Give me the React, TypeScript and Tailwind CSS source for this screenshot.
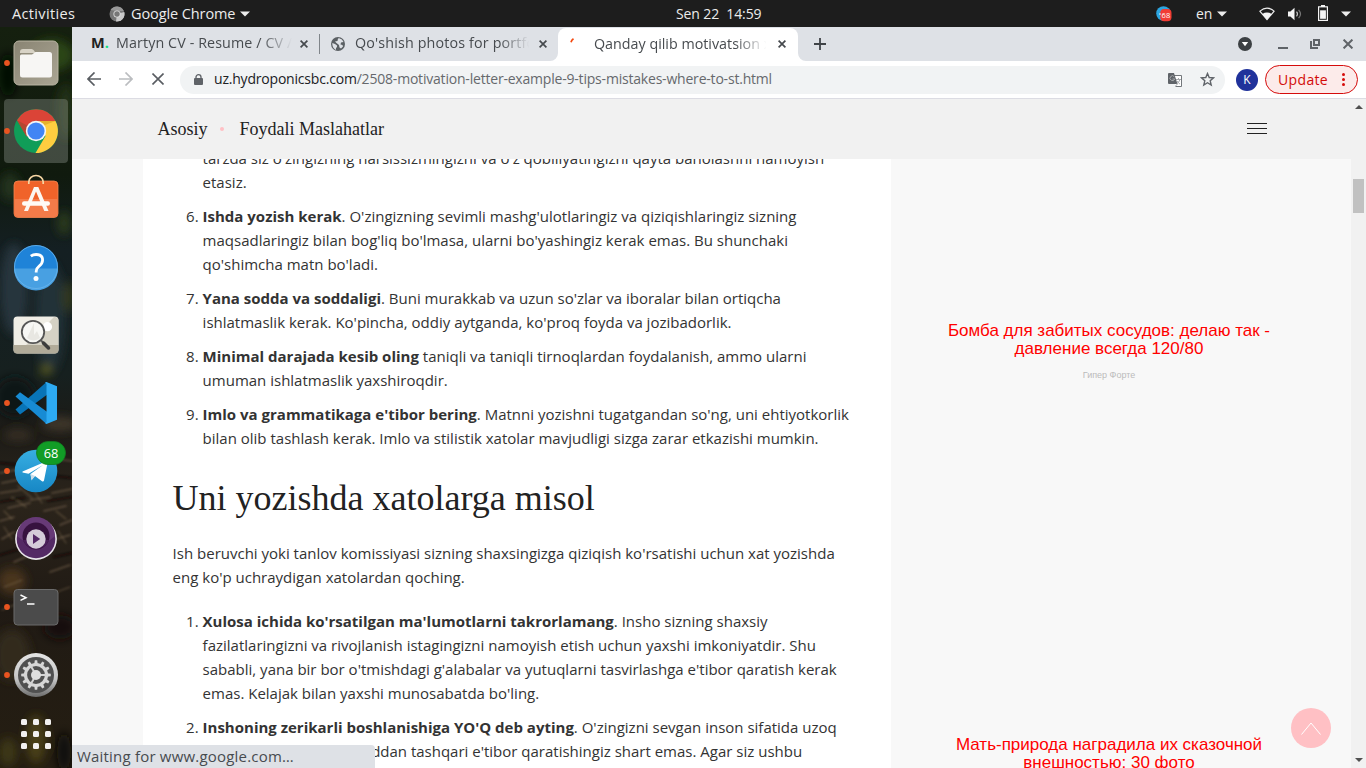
import type { ReactNode } from "react";

function TopBar() {
  return (
    <header className="flex h-[27px] shrink-0 items-center bg-[#1d1d1d] font-['Open_Sans','Noto_Sans',sans-serif] text-[14px] leading-[27px] whitespace-nowrap text-[#ececec]">
      <span className="ml-3 w-[97px] text-[14.5px] tracking-[0.35px]">Activities</span>
      <svg className="size-4" viewBox="0 0 16 16">
        <circle cx="8" cy="8" r="7.5" fill="#777" />
        <path d="M8 8 15.3 6A7.5 7.5 0 0 1 7 15.4Z" fill="#c9c9c9" />
        <path d="M1.5 4A7.5 7.5 0 0 1 14.8 5H8Z" fill="#999" />
        <circle cx="8" cy="8" r="3.6" fill="#ddd" />
        <circle cx="8" cy="8" r="2.7" fill="#777" />
      </svg>
      <span className="ml-1.5 w-[105px] text-[14.5px] tracking-[-0.1px]">Google Chrome</span>
      <svg className="ml-1 h-[6px] w-[10px]" viewBox="0 0 10 6"><path d="M0 .5h10L5 5.5Z" fill="#ececec" /></svg>
      <span className="ml-[426px] w-[87px] tracking-[-0.1px]">Sen 22&nbsp; 14:59</span>
      <svg className="ml-[393px] size-[16px]" viewBox="0 0 16 16">
        <circle cx="7.5" cy="7.5" r="7.3" fill="#2ca5e0" />
        <rect x="4.2" y="3" width="11.3" height="12.3" rx="4" fill="#f23c34" />
        <circle cx="4" cy="8" r=".8" fill="#fff" />
        <text x="9.9" y="12" textAnchor="middle" fontSize="7.5" fill="#fff" fontFamily="Open Sans, sans-serif">68</text>
      </svg>
      <span className="ml-[24px] w-[17px]">en</span>
      <svg className="ml-1 h-[6px] w-[10px]" viewBox="0 0 10 6"><path d="M0 .5h10L5 5.5Z" fill="#ececec" /></svg>
      <svg className="ml-[32px] h-[14px] w-[16px]" viewBox="0 0 16 14">
        <path d="M.9 4.2Q8 -1.9 15.1 4.2L8 12.6Z" fill="none" stroke="#ececec" strokeWidth="1.1" />
        <path d="M3.3 6.9Q8 4 12.7 6.9L8 12.7Z" fill="#f4f4f4" />
      </svg>
      <svg className="ml-[12px] h-[14px] w-[16px]" viewBox="0 0 16 14">
        <path d="M1 4.5h2.4L7.5.7v12.6L3.4 9.5H1Z" fill="#f4f4f4" />
        <path d="M9.5 4.7q2 2.3 0 4.6" fill="none" stroke="#c0c0c0" strokeWidth="1.2" />
        <path d="M11.6 2.8q3.8 4.2 0 8.4" fill="none" stroke="#777" strokeWidth="1.2" />
      </svg>
      <svg className="mb-[2px] ml-[15px] h-[16px] w-[10px]" viewBox="0 0 10 16">
        <path d="M3 0h4v1.2h3V16H0V1.2h3Z" fill="#f4f4f4" />
        <path d="M1.2 2.4h7.6v12.4H1.2Z" fill="#1d1d1d" />
        <path d="M2.1 5.3h5.8v8.5H2.1Z" fill="#f4f4f4" />
      </svg>
      <svg className="ml-[13px] h-[6px] w-[10px]" viewBox="0 0 10 6"><path d="M0 .5h10L5 5.5Z" fill="#ececec" /></svg>
    </header>
  );
}

function DockItem({ running = false, children }: { running?: boolean; children: ReactNode }) {
  return (
    <svg className="relative block h-[68px] w-[72px] shrink-0" viewBox="0 0 72 68">
      {children}
      {running && <circle cx="7" cy="34" r="2.9" fill="#e95420" />}
    </svg>
  );
}

function Wallpaper() {
  return (
    <svg className="absolute inset-0 size-full" viewBox="0 0 72 741" preserveAspectRatio="none">
      <defs>
        <linearGradient id="wall" x1="0" y1="0" x2="0" y2="1">
          <stop offset="0" stopColor="#15200f" /><stop offset=".2" stopColor="#101a0e" />
          <stop offset=".3" stopColor="#141f22" /><stop offset=".47" stopColor="#16201f" />
          <stop offset=".54" stopColor="#1c1b17" /><stop offset=".64" stopColor="#2b241b" />
          <stop offset=".78" stopColor="#201a14" /><stop offset="1" stopColor="#251e12" />
        </linearGradient>
        <filter id="haze" x="-50%" y="-20%" width="200%" height="140%"><feGaussianBlur stdDeviation="5" /></filter>
        <filter id="soft" x="-20%" y="-20%" width="140%" height="140%"><feGaussianBlur stdDeviation="1" /></filter>
      </defs>
      <rect width="72" height="741" fill="url(#wall)" />
      <g filter="url(#haze)">
        <ellipse cx="52" cy="28" rx="22" ry="16" fill="#2b4514" />
        <ellipse cx="8" cy="48" rx="9" ry="22" fill="#060b06" />
        <ellipse cx="66" cy="85" rx="9" ry="28" fill="#223315" />
        <ellipse cx="10" cy="160" rx="10" ry="14" fill="#20321a" />
        <ellipse cx="64" cy="196" rx="7" ry="12" fill="#2c3b1b" />
        <ellipse cx="14" cy="262" rx="14" ry="46" fill="#26343c" />
        <ellipse cx="50" cy="290" rx="15" ry="55" fill="#223038" />
        <ellipse cx="68" cy="270" rx="6" ry="16" fill="#30381b" />
        <ellipse cx="46" cy="343" rx="6" ry="5" fill="#5c5d1b" />
        <ellipse cx="15" cy="370" rx="20" ry="20" fill="#0e1213" />
        <ellipse cx="60" cy="397" rx="18" ry="7" fill="#40372c" />
        <ellipse cx="18" cy="408" rx="14" ry="5" fill="#3a3228" />
        <ellipse cx="12" cy="554" rx="14" ry="13" fill="#49341b" />
        <ellipse cx="60" cy="600" rx="16" ry="12" fill="#121009" />
        <ellipse cx="12" cy="628" rx="18" ry="26" fill="#33291a" />
        <ellipse cx="36" cy="712" rx="10" ry="24" fill="#494018" />
        <ellipse cx="8" cy="725" rx="9" ry="14" fill="#3e3716" />
        <ellipse cx="64" cy="725" rx="7" ry="20" fill="#0c0b07" />
      </g>
      <g filter="url(#soft)" fill="none" strokeLinecap="round">
        <path d="M0 446 20 442M40 430 72 434M2 456 32 450M0 466 20 463M30 473 50 470M52 466 72 462M8 481 30 476M0 494 14 490M44 484 66 479M60 498 72 493M2 512 14 505M50 514 70 508M14 535 30 528M50 545 70 538" stroke="#6b5a45" strokeWidth="1.6" opacity=".75" />
        <path d="M18 459 32 471M34 464 42 476M12 470 26 480M4 484 12 492M56 484 66 492M4 500 12 512M58 504 66 516M4 560 22 553M54 566 70 560M2 583 14 578" stroke="#8c7557" strokeWidth="1.2" opacity=".5" />
        <path d="M0 436 40 440M36 447 72 451M0 475 24 471M48 474 72 470M0 528 20 522M54 530 72 526" stroke="#0c0b0a" strokeWidth="3" opacity=".55" />
      </g>
    </svg>
  );
}

function Dock() {
  const teeth = Array.from({ length: 12 }, (_, i) => i * 30);
  return (
    <aside className="relative flex w-[72px] shrink-0 flex-col overflow-hidden bg-[#171a12] pt-[2px]">
      <Wallpaper />
      <DockItem running>
        <defs><linearGradient id="files" x1="0" y1="0" x2="1" y2="1"><stop stopColor="#898473" /><stop offset="1" stopColor="#aaa593" /></linearGradient></defs>
        <rect x="14" y="12" width="44" height="44" rx="5" fill="url(#files)" stroke="#b9b4a2" strokeWidth="1" />
        <path d="M20 23q0-3 3-3h8.500q1.500 0 2.500 1.500l1.500 2.500H20Z" fill="#d8d3c6" />
        <path d="M20 27q0-1.500 1.500-1.500h10.500l3.500-2.500h14q2.500 0 2.500 2.500V46q0 2.500-2.500 2.500h-27Q20 48.500 20 46Z" fill="#f7f6f4" />
      </DockItem>
      <DockItem running>
        <rect x="4" y="2" width="64" height="64" rx="4" fill="#a9afa8" fillOpacity=".32" />
        <circle cx="36" cy="34" r="22" fill="#109d58" />
        <path d="M36 24H55.500A22 22 0 0 1 35.500 56L45.500 39Z" fill="#ffcd40" />
        <path d="M36 34 26.500 39.500 17 23.200A22 22 0 0 1 55.500 24H36Z" fill="#db4437" />
        <path d="M17 23.200 26.500 39.500 28 29Z" fill="#8f4a2c" opacity=".5" />
        <path d="M36 24h19.500L45 28Z" fill="#c99016" opacity=".45" />
        <circle cx="36" cy="34" r="10.200" fill="#f3f5f7" /><circle cx="36" cy="34" r="8.600" fill="#4285f4" />
      </DockItem>
      <DockItem>
        <rect x="14" y="16" width="44" height="36.500" rx="4" fill="#f0632a" stroke="#f58652" strokeWidth=".8" />
        <path d="M14.500 34h43v14q0 4-4 4h-35q-4 0-4-4Z" fill="#f47b49" />
        <path d="M28.800 19v-2a7.200 6.500 0 0 1 14.400 0v2" fill="none" stroke="#f6d6a4" strokeWidth="1.700" />
        <path d="M34 22h4.300l10.200 24h-4.200L36 26.500 28 46h-4Z" fill="#fbf7f2" />
        <rect x="22" y="36.300" width="28" height="4.400" rx="2.200" fill="#fffaf5" />
      </DockItem>
      <DockItem>
        <circle cx="36" cy="34" r="22" fill="#1f83d8" />
        <path d="M14 35.500h44A22 22 0 0 1 14 35.500Z" fill="#48a0e2" />
        <circle cx="36" cy="34" r="21.500" fill="none" stroke="#6bb5ec" strokeWidth=".8" />
        <path d="M30.800 23.200q2.300-1.700 5.300-1.700 6.500 0 6.500 5.600 0 3.500-3.700 6.300-2.700 2.100-2.700 4.900v1.200" fill="none" stroke="#fff" strokeWidth="2.800" />
        <circle cx="36" cy="45.500" r="2.500" fill="#fff" />
      </DockItem>
      <DockItem>
        <rect x="13.500" y="15.500" width="45" height="37" rx="4" fill="#f0eee6" />
        <path d="M54 16h0.500q4 0 4 4v24H26Z" fill="#d5d2c5" />
        <path d="M13.500 44h45v4.500q0 4-4 4h-37q-4 0-4-4Z" fill="#b1ab99" />
        <circle cx="47.500" cy="25.700" r="4.600" fill="#fff" />
        <path d="m40.500 39 3 3" stroke="#5d5d5d" strokeWidth="2" />
        <path d="m43.500 42 5 5" stroke="#3c3c3c" strokeWidth="3.500" strokeLinecap="round" />
        <circle cx="33" cy="31" r="11.200" fill="#f7f7f4" stroke="#555" strokeWidth="1.800" />
        <path d="m27 37 7-15v12l3-4 3 7a10 10 0 0 1-13 0Z" fill="#dddcd5" opacity=".6" />
      </DockItem>
      <DockItem running>
        <path d="M15.500 40.500 46.500 13 48 25 20 45.500Z" fill="#0874b7" />
        <path d="M15.500 27.500 20 23.200 48 43.500 46.500 55 15.500 27.500Z" fill="#178bd4" />
        <path d="M46.500 13 57 17.300V50.700L46.500 55 45 54Q46.500 54 46.500 52V16Q46.500 14 45 13.500Z" fill="#2daaf2" />
      </DockItem>
      <DockItem running>
        <defs><linearGradient id="telegram" x1="0" y1="0" x2="0" y2="1"><stop stopColor="#37aee2" /><stop offset="1" stopColor="#1787c5" /></linearGradient></defs>
        <circle cx="36" cy="34" r="21.300" fill="url(#telegram)" />
        <path d="M22.500 34.500 47 24q1-.2.700 1.200L44 43.500q-.5 1.500-2 .7L35 39 31.500 42.500l-1-5.500L43 28 28.500 36.800l-6-1.300Z" fill="#fff" />
        <path d="m30.500 37 1 6.500L35 39Z" fill="#c9dce8" />
        <rect x="36.500" y="4.500" width="29" height="23" rx="11.500" fill="#119c26" stroke="#107d1f" strokeWidth=".8" />
        <text x="51" y="21" textAnchor="middle" fill="#fff" fontSize="12.800" fontFamily="Open Sans, sans-serif">68</text>
      </DockItem>
      <DockItem>
        <circle cx="36" cy="34" r="20.900" fill="#e9e5eb" /><circle cx="36" cy="34" r="19.300" fill="#542a65" />
        <path d="M17 31a19 19 0 0 1 38 0q-18 17-38 0Z" fill="#673a77" />
        <circle cx="36" cy="31" r="13.500" fill="#37123f" /><path d="M23 35a14 14 0 0 0 26 0Z" fill="#4b205b" />
        <circle cx="36" cy="34" r="9.700" fill="#d5ccd9" />
        <path d="m33 29 7.200 5-7.200 5Z" fill="#532865" />
      </DockItem>
      <DockItem running>
        <rect x="14" y="16.500" width="44" height="35.500" rx="3.500" fill="#4b4b4b" stroke="#6b6b6b" />
        <path d="m20.500 22 5.500 2.700-5.500 2.700" fill="none" stroke="#fff" strokeWidth="1.500" />
        <path d="M27 31h7.500" stroke="#fff" strokeWidth="1.500" />
      </DockItem>
      <DockItem running>
        <defs><linearGradient id="gear" x1="0" y1="0" x2="0" y2="1"><stop stopColor="#e5e5e5" /><stop offset=".6" stopColor="#c4c4c4" /><stop offset="1" stopColor="#6c6c6c" /></linearGradient></defs>
        <circle cx="36" cy="34" r="22" fill="url(#gear)" /><circle cx="36" cy="34" r="18" fill="#505050" />
        {teeth.map((a) => <path key={a} d="m34.300 23 .5-3.800h2.400l.5 3.800Z" fill="#d7d7d7" transform={`rotate(${a} 36 34)`} />)}
        <circle cx="36" cy="34" r="10.500" fill="none" stroke="#d6d6d6" strokeWidth="3.200" />
        <path d="M36 34h10M36 34l-5-8.700M36 34l-5 8.700" stroke="#d3d3d3" strokeWidth="2" /><circle cx="36" cy="34" r="5" fill="#dedede" />
      </DockItem>
      <div className="relative mt-[10px] ml-[21px] grid w-[30px] grid-cols-3 gap-[6px]">
        {teeth.slice(0, 9).map((n) => <i key={n} className="size-[6px] rounded-[1.5px] bg-[#f2f1ef]" />)}
      </div>
    </aside>
  );
}

function Close({ className = "" }: { className?: string }) {
  return <svg className={`size-[8px] shrink-0 ${className}`} viewBox="0 0 8 8"><path d="m.6.6 6.800 6.800M7.400.600.600 7.400" stroke="#45494d" strokeWidth="1.700" /></svg>;
}

function TabStrip() {
  return (
    <div className="flex h-[34px] shrink-0 items-center bg-[#dee1e6] font-['Open_Sans','Noto_Sans',sans-serif] text-[14.3px] whitespace-nowrap text-[#474b4f]">
      <div className="flex h-full w-[247px] items-center">
        <b className="mb-[2px] ml-[19px] w-[25px] text-[14.5px] font-bold text-[#222]">M<span className="text-[#12e080]">.</span></b>
        <span className="mb-[2px] w-[176px] overflow-hidden tracking-[0.1px] [mask-image:linear-gradient(to_right,black_82%,transparent)]">Martyn CV - Resume / CV /</span>
        <Close className="ml-[8px]" />
      </div>
      <i className="h-5 w-px bg-[#80858a]" />
      <div className="flex h-full w-[238px] items-center">
        <svg className="ml-[11px] size-[14px]" viewBox="0 0 14 14"><circle cx="7" cy="7" r="7" fill="#5b6064" /><path d="M1.300 6 4 7l2 1.500v1.500l-1 1v2Q1 11 1.300 6ZM7 1.500l1.200-.2Q11.500 2 12.500 5L10 5.500 9.500 7.500l2 .5.5 1.500-2 2-1.500-1L8 8 5.500 6 4 4.500 6.500 4Z" fill="#dee1e6" /></svg>
        <span className="mb-[2px] ml-[10px] w-[176px] overflow-hidden tracking-[0.15px] [mask-image:linear-gradient(to_right,black_82%,transparent_99%)]">Qo'shish photos for portfolio</span>
        <Close className="ml-[8px]" />
      </div>
      <div className="relative flex h-[33px] w-[240px] items-center self-end rounded-t-lg bg-white pb-px">
        <svg className="absolute bottom-0 -left-2 size-2" viewBox="0 0 8 8"><path d="M8 0v8H0a8 8 0 0 0 8-8Z" fill="#fff" /></svg>
        <svg className="absolute -right-2 bottom-0 size-2" viewBox="0 0 8 8"><path d="M0 0v8h8A8 8 0 0 1 0 0Z" fill="#fff" /></svg>
        <svg className="mb-[8px] ml-[12px] h-[5px] w-[5px]" viewBox="0 0 5 5"><path d="M1 4.300Q1.500 2.200 3.500.8" fill="none" stroke="#f4480f" strokeWidth="1.700" /></svg>
        <span className="mb-px ml-[19px] w-[176px] overflow-hidden [mask-image:linear-gradient(to_right,black_80%,transparent_98%)]">Qanday qilib motivatsion xat</span>
        <Close className="ml-[8px]" />
      </div>
      <svg className="ml-[16px] size-[12px]" viewBox="0 0 12 12"><path d="M0 6h12M6 0v12" stroke="#3f4347" strokeWidth="1.800" /></svg>
      <svg className="ml-[412px] size-[14px]" viewBox="0 0 14 14"><circle cx="7" cy="7" r="7" fill="#3c4043" /><path d="M3.800 5h6.400L7 9.300Z" fill="#fff" /></svg>
      <i className="mt-[7px] ml-[26px] h-[2px] w-[10px] bg-[#5f6368]" />
      <svg className="ml-[22px] size-[10px]" viewBox="0 0 10 10"><path d="M4 1h5v5H4ZM1 2v7h7" fill="none" stroke="#5f6368" strokeWidth="2" /></svg>
      <svg className="ml-[23px] size-[10px]" viewBox="0 0 10 10"><path d="m.6.600 8.800 8.800M9.400.600.600 9.400" stroke="#5f6368" strokeWidth="2" /></svg>
    </div>
  );
}

function Toolbar() {
  return (
    <div className="flex h-[38px] shrink-0 items-center border-b border-[#dcdce3] bg-white font-['Open_Sans','Noto_Sans',sans-serif] whitespace-nowrap">
      <svg className="mb-px ml-[15px] size-[14px]" viewBox="0 0 14 14"><path d="M14 7H1M7.500.500 1 7l6.500 6.500" fill="none" stroke="#595d62" strokeWidth="1.700" /></svg>
      <svg className="mb-px ml-[18px] size-[14px]" viewBox="0 0 14 14"><path d="M0 7h13M6.500.500 13 7l-6.500 6.500" fill="none" stroke="#bbbdc0" strokeWidth="1.700" /></svg>
      <svg className="mb-px ml-[19px] size-[12px]" viewBox="0 0 12 12"><path d="m.5.500 11 11M11.500.500.500 11.500" stroke="#595d62" strokeWidth="1.600" /></svg>
      <div className="ml-[16px] flex h-[28px] w-[1045px] items-center rounded-full bg-[#f1f3f4]">
        <svg className="mb-px ml-[14px] h-[11px] w-[9px]" viewBox="0 0 9 11"><rect y="4" width="9" height="7" rx="1" fill="#5f6368" /><path d="M2 4.500V3a2.500 2.300 0 0 1 5 0v1.500" fill="none" stroke="#5f6368" strokeWidth="1.300" /></svg>
        <span className="mb-[2px] ml-[11px] w-[560px] text-[14px] tracking-[-0.2px] text-[#66696d]"><span className="text-[#202124]">uz.hydroponicsbc.com</span>/2508-motivation-letter-example-9-tips-mistakes-where-to-st.html</span>
        <svg className="ml-[394px] size-[14px]" viewBox="0 0 14 14"><path d="M5.500 2.500H13.500v11H7.500" fill="#fff" stroke="#73777b" /><path d="M0 1q0-1 1-1h5l3.500 11H1q-1 0-1-1Z" fill="#5f6368" /><path d="M6.300 3.700A2.400 2.400 0 1 0 6.700 6H4.500M8 6.500h5M10.500 5v1.500M12 6.500q-1 3-3.500 4.500M9 8q1.500 2.500 3 3M9.500 11 7.500 13" fill="none" stroke="#a7aaad" strokeWidth="1" /></svg>
        <svg className="ml-[18px] size-[15px]" viewBox="0 0 15 15"><path d="m7.500 1.500 1.700 4 4.300.400-3.300 2.900 1 4.200-3.700-2.300-3.700 2.300 1-4.200L1.500 5.900l4.300-.4Z" fill="none" stroke="#5f6368" strokeWidth="1.400" /></svg>
      </div>
      <div className="ml-[11px] flex size-[22px] items-center justify-center rounded-full bg-[#20329b] text-[12px] leading-none text-white">K</div>
      <div className="ml-[7px] flex h-[29px] w-[93px] items-center rounded-full border border-[#d50b0b] bg-[#fcebea] text-[14px] text-[#d30b08]">
        <span className="ml-[12px] w-[51px] tracking-[0.35px]">Update</span>
        <svg className="ml-[13px] h-[13px] w-[3px]" viewBox="0 0 3 13"><g fill="#d50b0b"><circle cx="1.500" cy="1.600" r="1.500" /><circle cx="1.500" cy="6.500" r="1.500" /><circle cx="1.500" cy="11.400" r="1.500" /></g></svg>
      </div>
    </div>
  );
}

function Tip({ n, children }: { n: number | null; children: ReactNode }) {
  return (
    <li className="mb-[10px] flex">
      <span className="w-[59.6px] shrink-0 pr-[4px] text-right">{n !== null && `${n}.`}</span>
      <div>{children}</div>
    </li>
  );
}

function Article() {
  return (
    <article className="w-[748px] shrink-0 bg-white">
      <div className="-mt-[13px] font-['Open_Sans',sans-serif] text-[15px] leading-[24px] whitespace-nowrap text-[#333]">
        <ol>
          <Tip n={null}>tarzda siz o'zingizning narsissizmingizni va o'z qobiliyatingizni qayta baholashni namoyish<br />etasiz.</Tip>
          <Tip n={6}><b>Ishda yozish kerak</b>. O'zingizning sevimli mashg'ulotlaringiz va qiziqishlaringiz sizning<br />maqsadlaringiz bilan bog'liq bo'lmasa, ularni bo'yashingiz kerak emas. Bu shunchaki<br />qo'shimcha matn bo'ladi.</Tip>
          <Tip n={7}><b>Yana sodda va soddaligi</b>. Buni murakkab va uzun so'zlar va iboralar bilan ortiqcha<br />ishlatmaslik kerak. Ko'pincha, oddiy aytganda, ko'proq foyda va jozibadorlik.</Tip>
          <Tip n={8}><b>Minimal darajada kesib oling</b> taniqli va taniqli tirnoqlardan foydalanish, ammo ularni<br />umuman ishlatmaslik yaxshiroqdir.</Tip>
          <Tip n={9}><b>Imlo va grammatikaga e'tibor bering</b>. Matnni yozishni tugatgandan so'ng, uni ehtiyotkorlik<br />bilan olib tashlash kerak. Imlo va stilistik xatolar mavjudligi sizga zarar etkazishi mumkin.</Tip>
        </ol>
        <h2 className="mt-[28px] ml-[29.6px] h-[63px] font-['Liberation_Serif',serif] text-[36px] leading-[40px] text-[#222]">Uni yozishda xatolarga misol</h2>
        <p className="mb-[20px] ml-[29.6px]">Ish beruvchi yoki tanlov komissiyasi sizning shaxsingizga qiziqish ko'rsatishi uchun xat yozishda<br />eng ko'p uchraydigan xatolardan qoching.</p>
        <ol>
          <Tip n={1}><b>Xulosa ichida ko'rsatilgan ma'lumotlarni takrorlamang</b>. Insho sizning shaxsiy<br />fazilatlaringizni va rivojlanish istagingizni namoyish etish uchun yaxshi imkoniyatdir. Shu<br />sababli, yana bir bor o'tmishdagi g'alabalar va yutuqlarni tasvirlashga e'tibor qaratish kerak<br />emas. Kelajak bilan yaxshi munosabatda bo'ling.</Tip>
          <Tip n={2}><b>Inshoning zerikarli boshlanishiga YO'Q deb ayting</b>. O'zingizni sevgan inson sifatida uzoq<br /><span className="inline-block w-[151px]" />haddan tashqari e'tibor qaratishingiz shart emas. Agar siz ushbu</Tip>
        </ol>
      </div>
    </article>
  );
}

function Page() {
  return (
    <div className="relative flex min-h-0 flex-1">
      <div className="flex min-w-0 flex-1 flex-col overflow-hidden bg-[#f8f8f8]">
        <header className="z-10 flex h-[60px] shrink-0 items-center bg-[#f1f1f1] font-['Liberation_Serif',serif] text-[18px] text-[#222]">
          <span className="ml-[85.600px]">Asosiy</span>
          <i className="mx-[12px] ml-[12px] size-[4px] rounded-full bg-[#ffc0c5]" />
          <span className="ml-[4px]">Foydali Maslahatlar</span>
          <div className="mr-[84px] mb-[2px] ml-auto flex w-[20px] flex-col gap-[4px]">
            <i className="h-px bg-[#222]" /><i className="h-px bg-[#222]" /><i className="h-px bg-[#222]" />
          </div>
        </header>
        <main className="flex min-h-0 flex-1 overflow-hidden pl-[71px]">
          <Article />
          <aside className="ml-[38px] w-[360px] shrink-0 pt-[163px] text-center font-['Liberation_Sans',sans-serif] text-[17px] leading-[18px] text-[#f00]">
            <p>Бомба для забитых сосудов: делаю так -<br />давление всегда 120/80</p>
            <p className="mt-[8px] text-[9px] leading-[18px] text-[#bbb]">Гипер Форте</p>
            <p className="mt-[352px]">Мать-природа наградила их сказочной<br />внешностью: 30 фото</p>
          </aside>
        </main>
      </div>
      <div className="flex w-[15px] flex-col items-center bg-[#f1f1f1]">
        <svg className="mt-[6px] h-[4px] w-[8px]" viewBox="0 0 8 4"><path d="M0 4h8L4 0Z" fill="#505050" /></svg>
        <i className="mt-[70px] h-[34px] w-[11px] bg-[#c1c1c1]" />
        <svg className="mt-auto mb-[6px] h-[4px] w-[8px]" viewBox="0 0 8 4"><path d="M0 0h8L4 4Z" fill="#505050" /></svg>
      </div>
      <button className="absolute right-[35px] bottom-[20px] flex size-[40px] items-center justify-center rounded-full bg-[#ffc0c4]">
        <svg className="h-[13px] w-[20px]" viewBox="0 0 20 13"><path d="M.5 12.500 10 1l9.500 11.500" fill="none" stroke="#fff" /></svg>
      </button>
      <div className="absolute bottom-0 left-0 h-[23px] w-[303px] rounded-tr bg-[#dee1e6] pl-[5px] font-['Open_Sans','Noto_Sans',sans-serif] text-[15px] leading-[23px] tracking-[0.2px] whitespace-nowrap text-[#474b4f]">Waiting for www.google.com…</div>
    </div>
  );
}

export default function App() {
  return (
    <div className="flex h-[768px] w-[1366px] flex-col overflow-hidden">
      <TopBar />
      <div className="flex min-h-0 flex-1">
        <Dock />
        <div className="flex min-w-0 flex-1 flex-col">
          <TabStrip />
          <Toolbar />
          <Page />
        </div>
      </div>
    </div>
  );
}
